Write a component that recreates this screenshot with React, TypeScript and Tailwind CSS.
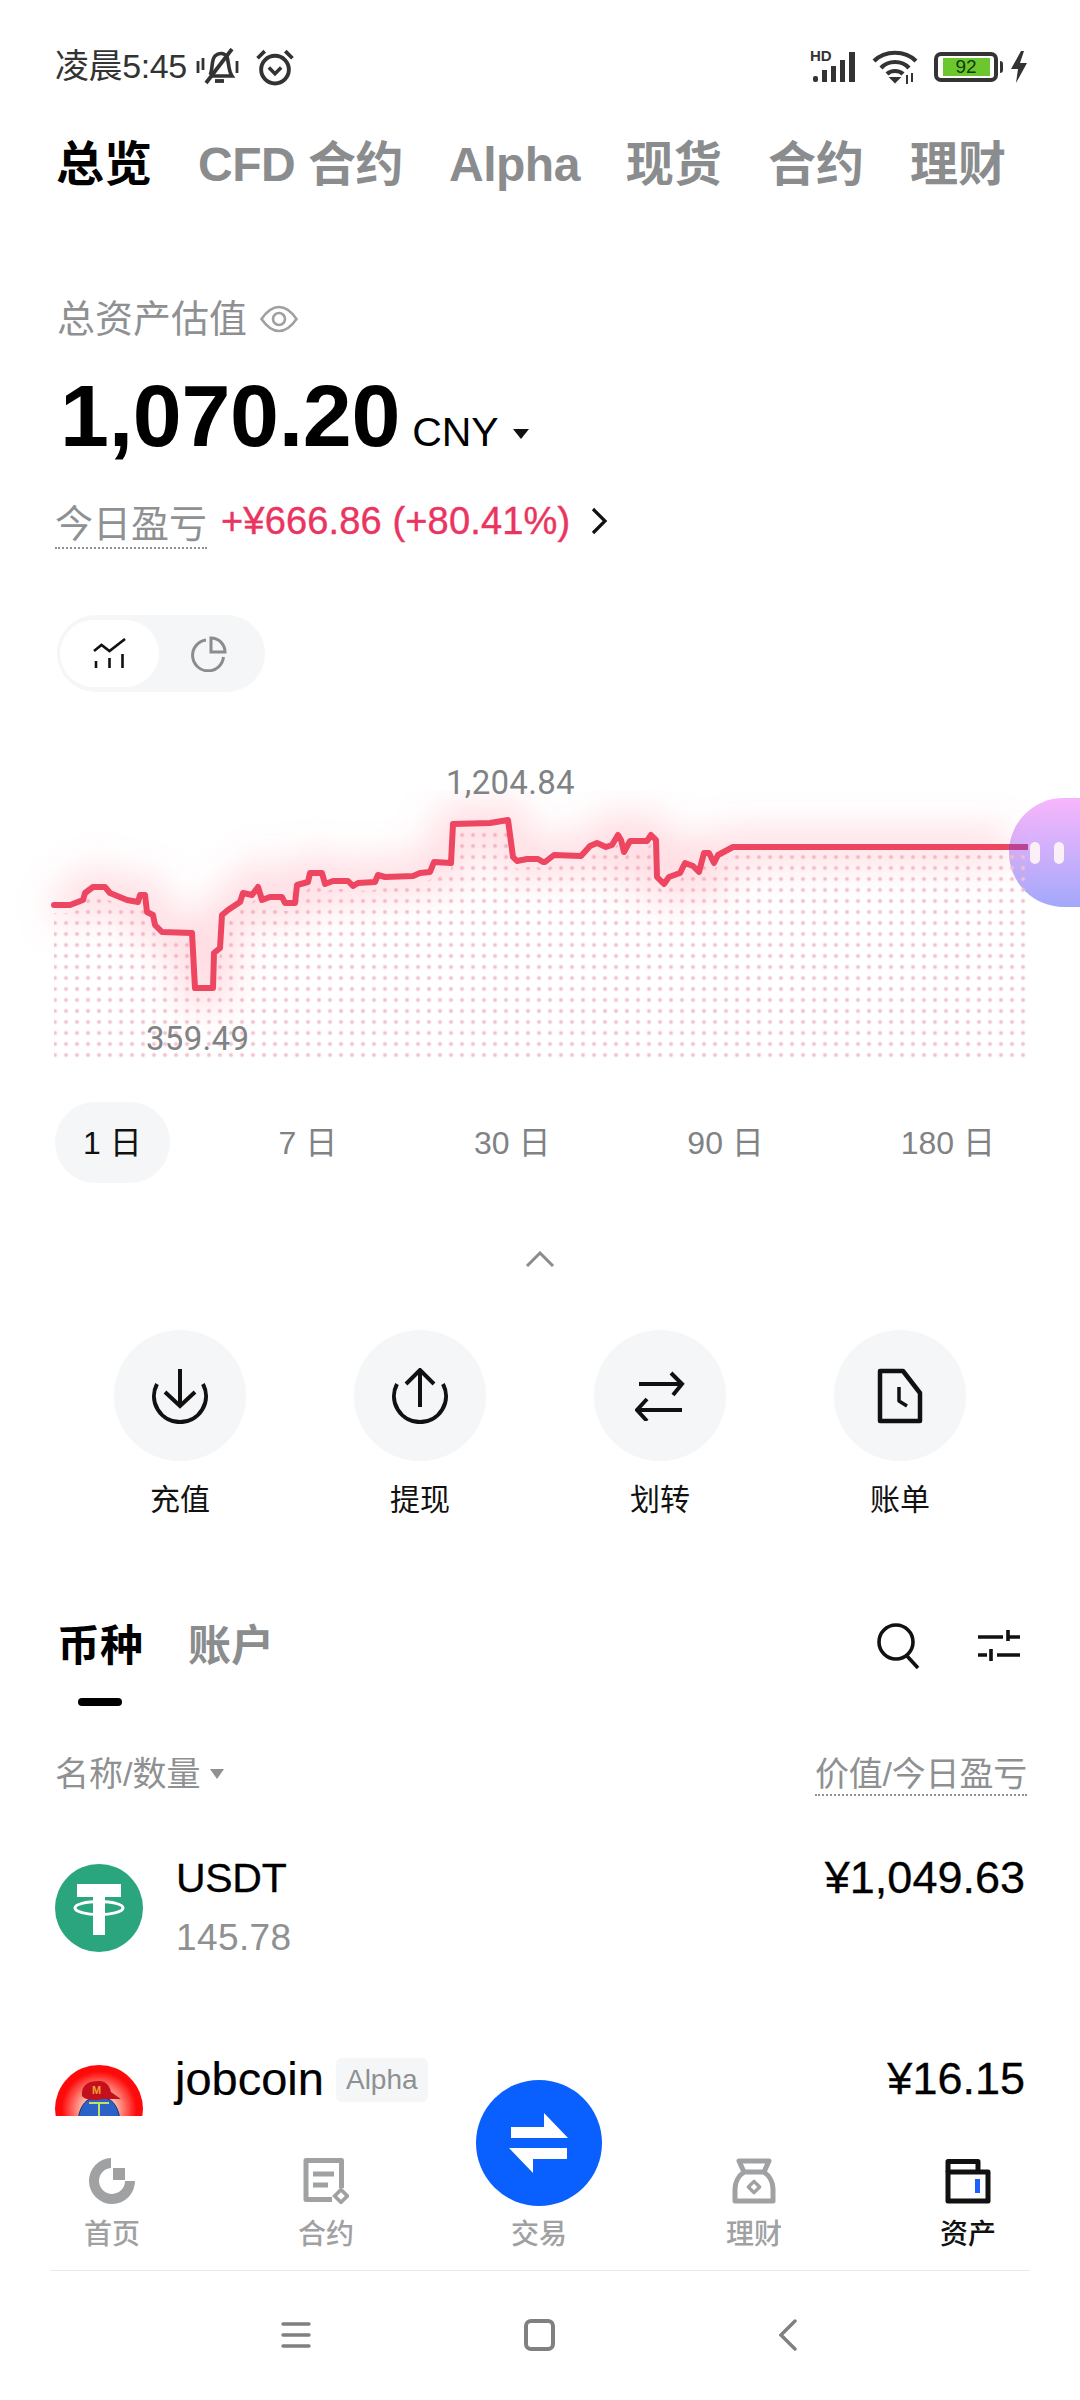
import { ReactNode } from 'react';

const LINE =
  '54,905 70,905 83,900 85,893 93,887 105,887 110,893 127,900 138,902 140,895 145,895 147,912 153,915 155,925 162,932 192,933 195,988 213,988 214,953 220,948 222,915 228,910 240,902 243,893 252,895 258,887 262,900 270,897 282,897 285,903 295,903 297,885 308,882 310,873 322,873 325,884 333,881 348,881 353,886 358,883 375,882 378,875 385,877 413,876 420,873 430,872 434,862 451,863 453,824 490,823 508,820 513,857 517,861 527,859 538,859 543,862 545,862 554,855 581,856 590,846 597,843 606,847 612,845 618,835 621,840 624,852 630,841 647,841 651,835 656,840 657,877 664,884 669,877 680,873 685,863 693,866 699,872 704,853 709,853 714,863 718,855 733,847 1009,847';

function Chart() {
  return (
    <div className="relative mt-[98px] h-[280px]">
      <div className="absolute left-[1009px] top-[8px] flex h-[109px] w-[71px] items-center gap-[14px] rounded-l-full bg-gradient-to-b from-[#f7b6fc] to-[#a3a8fb] pl-[21px]">
        <div className="h-[22px] w-[10px] rounded-full bg-[#fbf0f6]" />
        <div className="h-[22px] w-[10px] rounded-full bg-[#fbf0f6]" />
      </div>
      <svg viewBox="0 790 1080 280" className="relative block h-[280px] w-[1080px]">
        <defs>
          <pattern id="dots" x="49.5" y="1049.5" width="11" height="11" patternUnits="userSpaceOnUse">
            <circle cx="5.5" cy="5.5" r="2" fill="#f2c2cf" />
          </pattern>
          <clipPath id="under">
            <polygon points={`${LINE} 1028,847 1028,1060 54,1060`} transform="translate(0,8)" />
          </clipPath>
          <filter id="glow" filterUnits="userSpaceOnUse" x="0" y="740" width="1080" height="330">
            <feGaussianBlur stdDeviation="18" />
          </filter>
        </defs>
        <rect x="53" y="800" width="973" height="260" fill="url(#dots)" clipPath="url(#under)" />
        <polyline points={LINE} fill="none" stroke="#ff6a80" strokeOpacity="0.24" strokeWidth="34" filter="url(#glow)" />
        <polyline points={LINE} fill="none" stroke="#ee4560" strokeWidth="6" strokeLinejoin="round" strokeLinecap="round" />
        <line x1="1009" y1="847" x2="1028" y2="847" stroke="#bb4391" strokeWidth="6" />
      </svg>
      <div className="absolute left-[446px] top-[-27px] font-['Roboto',sans-serif] text-[33px] leading-[40px] tracking-[0.3px] text-[#808284]">1,204.84</div>
      <div className="absolute left-[146px] top-[229px] font-['Roboto',sans-serif] text-[33px] leading-[40px] tracking-[0.3px] text-[#808284]">359.49</div>
    </div>
  );
}

function StatusBar() {
  return (
    <div className="box-content flex h-[37px] items-center justify-between pl-[55px] pr-[52px] pt-[48px]">
      <div className="flex items-center text-[#333]">
        <span className="text-[34px] leading-[37px] tracking-[-0.4px]">凌晨5:45</span>
        <svg width="44" height="38" viewBox="0 0 44 38" fill="none" stroke="#333" className="ml-[9px]">
          <path d="M14 27 C17 22 15 12 19 8 C23 4 29 5 31 9 C33 14 32 22 36 28 L14 28" strokeWidth="3.6" />
          <path d="M19 33 H28" strokeWidth="3.8" />
          <path d="M10 35 L36 1" strokeWidth="3.8" />
          <path d="M2 13 V25 M7 10 V22 M41 13 V25" strokeWidth="2.8" />
        </svg>
        <svg width="40" height="38" viewBox="0 0 38 37" fill="none" stroke="#333" strokeWidth="3.8" className="ml-[15px]">
          <circle cx="19" cy="21" r="13.5" />
          <path d="M2 10 L9 3 M36 10 L29 3" strokeWidth="3.6" />
          <path d="M13 19 L19 25 L25 19" strokeWidth="3.4" />
        </svg>
      </div>
      <div className="flex items-center">
        <div className="relative h-[34px] w-[50px]">
          <span className="absolute left-0 top-[-2px] text-[15px] font-bold leading-[16px] text-[#333]">HD</span>
          <svg width="50" height="34" viewBox="0 0 50 34" fill="#333" className="block">
            <rect x="3" y="26" width="5" height="6" rx="2" />
            <rect x="12" y="20" width="5" height="12" />
            <rect x="21" y="16" width="5" height="16" />
            <rect x="30" y="10" width="5" height="22" />
            <rect x="39" y="2" width="6" height="30" />
          </svg>
        </div>
        <svg width="46" height="36" viewBox="0 0 46 36" fill="none" stroke="#333" strokeWidth="4.2" className="ml-[12px]">
          <path d="M2 12 C13 1 33 1 44 12" />
          <path d="M9 19 C16 11 30 11 37 19" />
          <path d="M15 25 C19 21 27 21 31 25" />
          <path d="M19 29 L23 33 L27 29 Z" fill="#333" strokeWidth="2" />
          <path d="M35 26 V35 M40 24 V33" strokeWidth="2" />
        </svg>
        <div className="ml-[16px] flex h-[30px] w-[64px] items-center justify-center rounded-[7px] border-[4px] border-[#333]">
          <div className="flex h-[18px] w-[47px] items-center justify-center bg-[#6cc72e] text-[19px] leading-[18px] text-[#123a0c]">92</div>
        </div>
        <div className="ml-[2px] h-[12px] w-[3px] rounded-r bg-[#333]" />
        <svg width="18" height="32" viewBox="0 0 18 32" fill="#333" className="ml-[7px]">
          <polygon points="11,0 1,18 8,18 6,32 17,12 10,12 14,0" />
        </svg>
      </div>
    </div>
  );
}

function Action({ label, children }: { label: string; children: ReactNode }) {
  return (
    <div className="flex flex-col items-center">
      <div className="flex h-[131px] w-[132px] items-center justify-center rounded-full bg-[#f5f6f7]">{children}</div>
      <div className="mt-[19px] text-[30px] leading-[40px] text-[#111]">{label}</div>
    </div>
  );
}

function NavItem({ label, active, children }: { label: string; active?: boolean; children: ReactNode }) {
  return (
    <div className="flex flex-col items-center">
      <div className="flex h-[46px] items-center justify-center">{children}</div>
      <div className={`mt-[15px] text-[28px] font-medium leading-[32px] ${active ? 'text-[#111]' : 'text-[#9fa1a3]'}`}>{label}</div>
    </div>
  );
}

function BottomNav() {
  return (
    <div className="absolute bottom-0 left-0 h-[284px] w-[1080px] bg-white pt-[42px]">
      <div className="grid grid-cols-5 px-[5px]">
        <NavItem label="首页">
          <svg width="46" height="46" viewBox="0 0 46 46" fill="#9fa1a3">
            <path d="M22 0 A23 23 0 1 0 46 23 H36 A13 13 0 1 1 22 10 Z" />
            <rect x="24" y="10" width="12" height="12" />
          </svg>
        </NavItem>
        <NavItem label="合约">
          <svg width="46" height="46" viewBox="0 0 46 46" fill="none" stroke="#9fa1a3" strokeWidth="5">
            <path d="M29 41.5 H3 V2.5 H38.5 V30" strokeLinejoin="round" />
            <path d="M10 16 H31 M10 27 H25" />
            <rect x="33.5" y="33.5" width="9" height="9" strokeWidth="3.6" transform="rotate(45 38 38)" />
          </svg>
        </NavItem>
        <div className="flex flex-col items-center pr-[2px]">
          <div className="mt-[-78px] flex h-[126px] w-[126px] items-center justify-center rounded-full bg-[#0a60ff]">
            <svg width="126" height="126" viewBox="0 0 126 126" fill="#fff">
              <polygon points="35,47 68,47 68,33 92,58 35,58" />
              <polygon points="33,68 91,68 91,79 57,79 57,93" />
            </svg>
          </div>
          <div className="mt-[13px] text-[28px] font-medium leading-[32px] text-[#9fa1a3]">交易</div>
        </div>
        <NavItem label="理财">
          <svg width="44" height="46" viewBox="0 0 44 46" fill="none" stroke="#9fa1a3" strokeWidth="5" strokeLinejoin="round">
            <path d="M7 3 H37 L32 14 H12 Z" />
            <path d="M12 14 C6 18 3 25 3 31 V43 H41 V31 C41 25 38 18 32 14" />
            <rect x="18" y="25" width="8" height="8" strokeWidth="3.4" transform="rotate(45 22 29)" />
          </svg>
        </NavItem>
        <NavItem label="资产" active>
          <svg width="46" height="46" viewBox="0 0 46 46" fill="none" stroke="#111" strokeWidth="5" strokeLinejoin="round">
            <path d="M3 14 V3.5 H33 V14" />
            <rect x="3" y="14" width="40" height="29" />
            <rect x="30" y="21" width="5" height="14" fill="#1f5fff" stroke="none" />
          </svg>
        </NavItem>
      </div>
      <div className="mx-[50px] mt-[19px] h-px w-[980px] bg-[#e8e9ea]" />
      <div className="ml-[281px] mt-[48px] flex items-center">
        <svg width="30" height="30" viewBox="0 0 30 30" stroke="#808080" strokeWidth="3.4" strokeLinecap="round">
          <path d="M2 4 H28 M2 15 H28 M2 26 H28" />
        </svg>
        <svg width="31" height="32" viewBox="0 0 31 32" fill="none" stroke="#808080" strokeWidth="4" className="ml-[213px]">
          <rect x="2" y="2" width="27" height="28" rx="5" />
        </svg>
        <svg width="18" height="32" viewBox="0 0 18 32" fill="none" stroke="#808080" strokeWidth="3.4" strokeLinecap="round" className="ml-[224px]">
          <path d="M16 2 L2 16 L16 30" />
        </svg>
      </div>
    </div>
  );
}

export default function App() {
  return (
    <div className="relative h-[2400px] w-[1080px] overflow-hidden bg-white font-['Liberation_Sans','Noto_Sans_CJK_SC',sans-serif]">
      <StatusBar />

      <div className="mt-[51px] flex h-[58px] items-center gap-[46px] pl-[56px] text-[48px] font-bold leading-[58px] text-[#8a8c8e]">
        <span className="text-black">总览</span>
        <span className="tracking-[-0.5px]">CFD 合约</span>
        <span className="tracking-[-0.5px]">Alpha</span>
        <span>现货</span>
        <span>合约</span>
        <span>理财</span>
      </div>

      <div className="mt-[102px] flex h-[46px] items-center pl-[57px] text-[38px] leading-[46px] text-[#8e9092]">
        总资产估值
        <svg width="38" height="28" viewBox="0 0 38 28" fill="none" stroke="#9ea0a2" strokeWidth="2.6" className="ml-[13px]">
          <path d="M1.5 14 C7 6 13 2 19 2 S31 6 36.5 14 C31 22 25 26 19 26 S7 22 1.5 14 Z" />
          <circle cx="19" cy="14" r="6" />
        </svg>
      </div>

      <div className="mt-[24px] flex h-[100px] items-baseline pl-[60px] text-black">
        <span className="text-[88px] font-bold leading-[100px] tracking-[-0.3px]">1,070.20</span>
        <div className="ml-[12px] flex items-center">
          <span className="text-[41px] leading-[48px]">CNY</span>
          <svg width="16" height="10" viewBox="0 0 16 10" fill="#111" className="ml-[14px] mt-[4px]">
            <polygon points="0,0 16,0 8,10" />
          </svg>
        </div>
      </div>

      <div className="mt-[35px] flex items-start pl-[55px]">
        <span className="border-b-2 border-dotted border-[#8e9092] text-[38px] leading-[46px] text-[#8e9092]">今日盈亏</span>
        <span className="ml-[14px] mt-[-3px] text-[38px] leading-[46px] tracking-[0.15px] text-[#ea3560] [-webkit-text-stroke:0.4px_#ea3560]">+¥666.86 (+80.41%)</span>
        <svg width="18" height="28" viewBox="0 0 18 28" fill="none" stroke="#111" strokeWidth="3.2" className="ml-[20px] mt-[6px]">
          <path d="M3 2 L15 14 L3 26" />
        </svg>
      </div>

      <div className="ml-[57px] mt-[66px] flex h-[77px] w-[208px] items-center rounded-full bg-[#f5f6f7] pl-[3px]">
        <div className="flex h-[67px] w-[99px] items-center justify-center rounded-full bg-white">
          <svg width="33" height="31" viewBox="0 0 33 31" fill="none" stroke="#111" strokeWidth="2.6">
            <path d="M1 13 L8.5 7 L16.5 13 L32 1" />
            <path d="M3 23 V30 M16.5 20 V30 M29.5 16 V30" />
          </svg>
        </div>
        <svg width="36" height="36" viewBox="0 0 36 36" fill="none" stroke="#8a8c8e" strokeWidth="3" className="ml-[32px]">
          <path d="M15 4 A15.5 15.5 0 1 0 32.5 21" />
          <path d="M20 2 A14 14 0 0 1 34 16 H20 Z" />
        </svg>
      </div>

      <Chart />

      <div className="mt-[32px] flex h-[81px] items-center justify-between pl-[55px] pr-[57px] text-[32px] text-[#808284]">
        <div className="flex h-[81px] items-center rounded-full bg-[#f5f6f7] px-[28px] text-[#111]">1 日</div>
        <div className="px-[28px]">7 日</div>
        <div className="px-[28px]">30 日</div>
        <div className="px-[28px]">90 日</div>
        <div className="px-[28px]">180 日</div>
      </div>

      <div className="mt-[68px] flex justify-center">
        <svg width="30" height="16" viewBox="0 0 30 16" fill="none" stroke="#8a8c8e" strokeWidth="3" className="block">
          <path d="M2 15 L15 2 L28 15" />
        </svg>
      </div>

      <div className="mt-[63px] grid grid-cols-4 px-[60px]">
        <Action label="充值">
          <svg width="56" height="56" viewBox="0 0 56 56" fill="none" stroke="#111" strokeWidth="4">
            <path d="M5 16 A26 26 0 1 0 51 16" />
            <path d="M28 1 V38 M13 24 L28 38 L43 24" />
          </svg>
        </Action>
        <Action label="提现">
          <svg width="56" height="56" viewBox="0 0 56 56" fill="none" stroke="#111" strokeWidth="4">
            <path d="M5 16 A26 26 0 1 0 51 16" />
            <path d="M28 39 V2 M14 16 L28 2 L42 16" />
          </svg>
        </Action>
        <Action label="划转">
          <svg width="50" height="50" viewBox="0 0 50 50" fill="none" stroke="#111" strokeWidth="4">
            <path d="M4 13 H47 M36 2 L47 13 L38 24" />
            <path d="M47 39 H2 M12 28 L2 39 L12 50" />
          </svg>
        </Action>
        <Action label="账单">
          <svg width="46" height="56" viewBox="0 0 46 56" fill="none" stroke="#111" strokeWidth="4.5" strokeLinejoin="round">
            <path d="M3 3 H26 L43 25 V53 H3 Z" />
            <path d="M22 19 V33 L30 38" strokeWidth="3.5" />
          </svg>
        </Action>
      </div>

      <div className="mt-[101px] flex h-[50px] items-center pl-[57px] pr-[60px]">
        <span className="text-[43px] font-bold leading-[50px] text-black">币种</span>
        <span className="ml-[45px] text-[43px] font-bold leading-[50px] text-[#8a8c8e]">账户</span>
        <svg width="46" height="46" viewBox="0 0 46 46" fill="none" stroke="#111" strokeWidth="3.6" className="ml-auto">
          <circle cx="20" cy="19" r="17" />
          <path d="M31 33 L42 45" />
        </svg>
        <svg width="42" height="32" viewBox="0 0 42 32" fill="none" stroke="#111" strokeWidth="3.6" className="ml-[56px]">
          <path d="M0 7 H25 M30 0 V11 M30 7 H42" />
          <path d="M0 25 H9 M13 19 V31 M19 25 H42" />
        </svg>
      </div>
      <div className="ml-[78px] mt-[27px] h-[8px] w-[44px] rounded-full bg-black" />

      <div className="mt-[48px] flex items-start justify-between pl-[55px] pr-[53px] text-[34px] leading-[40px] text-[#8e9092]">
        <div className="flex items-center">
          名称/数量
          <svg width="14" height="10" viewBox="0 0 14 10" fill="#8e9092" className="ml-[10px]">
            <polygon points="0,0 14,0 7,10" />
          </svg>
        </div>
        <span className="border-b-2 border-dotted border-[#8e9092] tracking-[-0.2px]">价值/今日盈亏</span>
      </div>

      <div className="mt-[57px] flex items-start justify-between pl-[55px] pr-[55px]">
        <div className="flex items-start">
          <svg width="88" height="88" viewBox="0 0 88 88" className="mt-[11px]">
            <circle cx="44" cy="44" r="44" fill="#2aa57e" />
            <path d="M22 20 H66 V33 H50 V71 H38 V33 H22 Z" fill="#fff" />
            <ellipse cx="44" cy="44" rx="24" ry="6.5" fill="none" stroke="#fff" strokeWidth="3" />
          </svg>
          <div className="ml-[33px]">
            <div className="text-[41px] leading-[50px] tracking-[-0.3px] text-black [-webkit-text-stroke:0.3px_#000]">USDT</div>
            <div className="mt-[13px] text-[37px] leading-[44px] tracking-[0.4px] text-[#8e9092]">145.78</div>
          </div>
        </div>
        <div className="text-[45px] leading-[50px] text-black [-webkit-text-stroke:0.3px_#000]">¥1,049.63</div>
      </div>

      <div className="mt-[94px] flex items-start justify-between pl-[55px] pr-[55px]">
        <div className="flex items-start">
          <svg width="88" height="88" viewBox="0 0 88 88" className="mt-[11px]">
            <defs>
              <radialGradient id="red">
                <stop offset="0.4" stopColor="#ffb0a0" />
                <stop offset="0.85" stopColor="#ff0a0a" />
              </radialGradient>
            </defs>
            <circle cx="44" cy="44" r="44" fill="url(#red)" />
            <path d="M22 70 C22 45 28 32 44 32 C60 32 66 45 66 70 Z" fill="#2a62c8" stroke="#123070" strokeWidth="1" />
            <path d="M34 38 H54 M44 38 V60" stroke="#c8e060" strokeWidth="2" />
            <path d="M27 31 C26 20 33 16 44 16 C52 16 55 22 56 27 L66 34 L48 34 C40 36 30 35 27 31 Z" fill="#c4101c" />
            <text x="37" y="29" fontSize="11" fontWeight="700" fill="#f2a030">M</text>
          </svg>
          <span className="ml-[32px] text-[47px] leading-[50px] text-black [-webkit-text-stroke:0.2px_#000]">jobcoin</span>
          <span className="ml-[12px] mt-[4px] rounded-[6px] bg-[#f5f6f7] px-[10px] text-[28px] leading-[44px] text-[#8e9092]">Alpha</span>
        </div>
        <div className="text-[45px] leading-[50px] text-black [-webkit-text-stroke:0.3px_#000]">¥16.15</div>
      </div>

      <BottomNav />
    </div>
  );
}
